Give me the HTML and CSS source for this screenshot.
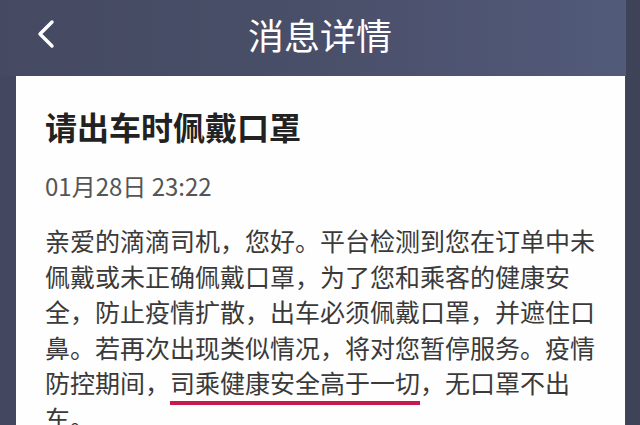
FILE: index.html
```html
<!DOCTYPE html>
<html lang="zh-CN">
<head>
  <meta charset="UTF-8">
  <meta name="viewport" content="width=device-width, initial-scale=1.0">
  <title>消息详情</title>
  <link rel="stylesheet" href="styles.css">
</head>
<body>

  <div class="screen">
    <header class="topbar">
      <a class="back" href="#">
        <svg width="18" height="30" viewBox="0 0 18 30">
          <polyline points="15,3 3,15 15,27" fill="none" stroke="#fff" stroke-width="3.4" stroke-linecap="round" stroke-linejoin="round"/>
        </svg>
      </a>
      <h1>消息详情</h1>
      <span></span>
    </header>

    <main class="card">
      <h2 class="msg-title">请出车时佩戴口罩</h2>
      <div class="msg-time">01月28日 23:22</div>
      <p class="msg-body">亲爱的滴滴司机，您好。平台检测到您在订单中未佩戴或未正确佩戴口罩，为了您和乘客的健康安全，防止疫情扩散，出车必须佩戴口罩，并遮住口鼻。若再次出现类似情况，将对您暂停服务。疫情防控期间，<span class="mark">司乘健康安全高于一切</span>，无口罩不出车。</p>
    </main>
  </div>

</body>
</html>
```

FILE: styles.css
```css
body {
  margin: 0;
  height: 100vh;
  overflow: hidden;
  background: #3e4357;
  font-family: "Noto Sans CJK SC", "Noto Sans", sans-serif;
}

.screen {
  margin-right: 14px;
  min-height: 100vh;
  background: #434860;
}

.topbar {
  height: 76px;
  padding-left: 14px;
  display: grid;
  grid-template-columns: 1fr auto 1fr;
  align-items: center;
  background: linear-gradient(90deg, #454a62 0%, #4a4f69 50%, #525a7a 100%);
}

.back {
  display: flex;
  padding-left: 23px;
  margin-top: -8px;
}

.topbar h1 {
  margin: 0 0 8px;
  font-size: 36px;
  font-weight: normal;
  color: #fff;
  line-height: 44px;
}

.card {
  background: #fefefe;
  margin: 0 1px 0 16px;
  padding: 30px 28px 30px 29px;
  color: #3a3a3a;
}

.msg-title {
  margin: 0;
  font-size: 32px;
  line-height: 40px;
  font-weight: bold;
  color: #222;
}

.msg-time {
  margin-top: 25px;
  font-size: 24px;
  line-height: 30px;
  color: #555;
}

.msg-body {
  margin: 22px 0 0;
  font-size: 25px;
  line-height: 35.5px;
  color: #3a3a3a;
}

.mark {
  text-decoration: underline;
  text-decoration-color: #c8194b;
  text-decoration-thickness: 4px;
  text-underline-offset: 8px;
}
```
